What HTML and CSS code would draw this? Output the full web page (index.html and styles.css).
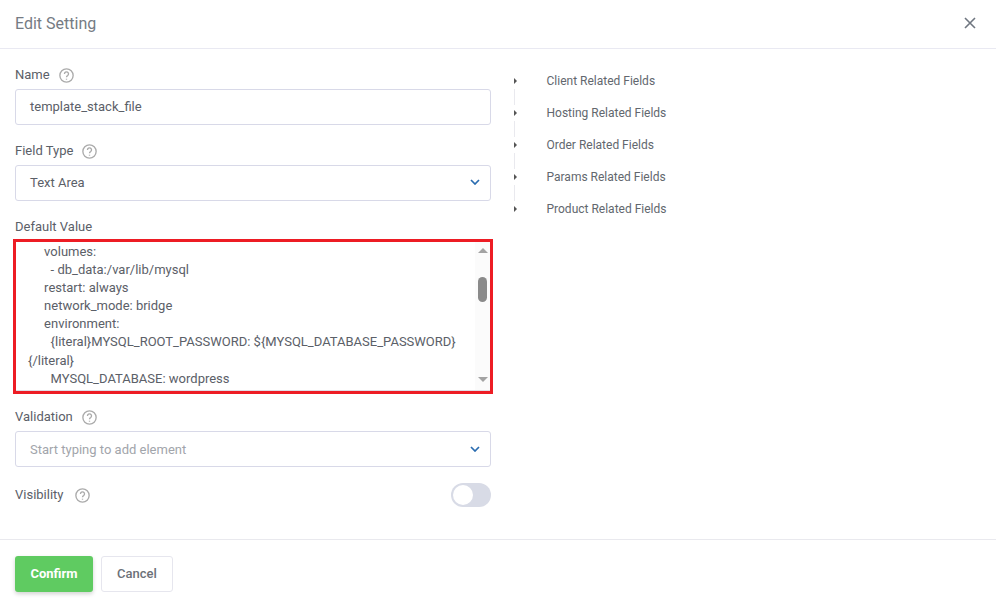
FILE: index.html
```html
<!DOCTYPE html>
<html lang="en">
<head>
<meta charset="utf-8">
<title>Edit Setting</title>
<link rel="stylesheet" href="styles.css">
</head>
<body>
<div class="modal">
  <header class="modal-head">
    <h1 class="modal-title">Edit Setting</h1>
    <svg class="close-icon" viewBox="0 0 12 12" width="12" height="12"><path d="M1 1l10 10M11 1L1 11"/></svg>
  </header>
  <main class="modal-body">
    <form class="form-col">
      <div class="field">
        <div class="label"><span>Name</span><svg class="help" viewBox="0 0 14 14"><circle cx="7" cy="7" r="6.2"/><path d="M5.1 5.5a1.9 1.9 0 1 1 2.9 1.6c-.7.4-1 .8-1 1.5"/><path class="dot" d="M7 10v.9"/></svg></div>
        <div class="control value">template_stack_file</div>
      </div>
      <div class="field">
        <div class="label"><span>Field Type</span><svg class="help" viewBox="0 0 14 14"><circle cx="7" cy="7" r="6.2"/><path d="M5.1 5.5a1.9 1.9 0 1 1 2.9 1.6c-.7.4-1 .8-1 1.5"/><path class="dot" d="M7 10v.9"/></svg></div>
        <div class="control select value"><span>Text Area</span><svg class="chev" viewBox="0 0 10 6" width="10" height="6"><path d="M1 1l4 4 4-4"/></svg></div>
      </div>
      <div class="field field-tight">
        <div class="label label-tight"><span>Default Value</span></div>
        <div class="highlight">
          <pre class="code">     volumes:
       - db_data:/var/lib/mysql
     restart: always
     network_mode: bridge
     environment:
       {literal}MYSQL_ROOT_PASSWORD: ${MYSQL_DATABASE_PASSWORD}
{/literal}
       MYSQL_DATABASE: wordpress</pre>
          <div class="scrollbar">
            <span class="arrow-up"></span>
            <span class="thumb"></span>
            <span class="arrow-down"></span>
          </div>
        </div>
      </div>
      <div class="field">
        <div class="label"><span>Validation</span><svg class="help" viewBox="0 0 14 14"><circle cx="7" cy="7" r="6.2"/><path d="M5.1 5.5a1.9 1.9 0 1 1 2.9 1.6c-.7.4-1 .8-1 1.5"/><path class="dot" d="M7 10v.9"/></svg></div>
        <div class="control select placeholder"><span>Start typing to add element</span><svg class="chev" viewBox="0 0 10 6" width="10" height="6"><path d="M1 1l4 4 4-4"/></svg></div>
      </div>
      <div class="toggle-row">
        <div class="label label-flat"><span>Visibility</span><svg class="help" viewBox="0 0 14 14"><circle cx="7" cy="7" r="6.2"/><path d="M5.1 5.5a1.9 1.9 0 1 1 2.9 1.6c-.7.4-1 .8-1 1.5"/><path class="dot" d="M7 10v.9"/></svg></div>
        <div class="switch"><span class="knob"></span></div>
      </div>
    </form>
    <ul class="tree">
      <li class="tree-row"><span class="caret"></span>Client Related Fields</li>
      <li class="tree-row"><span class="caret"></span>Hosting Related Fields</li>
      <li class="tree-row"><span class="caret"></span>Order Related Fields</li>
      <li class="tree-row"><span class="caret"></span>Params Related Fields</li>
      <li class="tree-row"><span class="caret"></span>Product Related Fields</li>
    </ul>
  </main>
  <footer class="modal-foot">
    <button class="btn btn-confirm" type="button">Confirm</button>
    <button class="btn btn-cancel" type="button">Cancel</button>
  </footer>
</div>
</body>
</html>
```
FILE: styles.css
```css
* { box-sizing: border-box; }
html, body { margin: 0; padding: 0; background: #fff; }
body { font-family: Roboto, "Liberation Sans", sans-serif; font-size: 13px; color: #5b6068; }

.modal { display: flex; flex-direction: column; height: 100vh; }

.modal-head {
  flex: none; height: 49px; display: flex; align-items: center; justify-content: space-between;
  padding: 0 20px 2px 15px; border-bottom: 1px solid #e9e9f2;
}
.modal-title { margin: 0; font-size: 16px; font-weight: 400; color: #757b83; }
.close-icon path { stroke: #6f7680; stroke-width: 1.6; fill: none; }

.modal-body { flex: 1; display: flex; gap: 24px; padding: 16px 15px 0; min-height: 0; }
.form-col { flex: none; width: 476px; }

.field { margin-bottom: 16px; }
.field-tight { margin-bottom: 13px; }

.label { display: flex; align-items: center; gap: 9px; height: 20px; margin-bottom: 4px; line-height: 20px; color: #5b6068; }
.label-tight { margin-bottom: 2px; }
.label-flat { margin-bottom: 0; gap: 11px; }

.help { flex: none; width: 15px; height: 15px; }
.help circle, .help path { fill: none; stroke: #ababab; stroke-width: 1.25; }

.control {
  height: 36px; display: flex; align-items: center; padding: 0 15px 0 14px;
  border: 1px solid #d8d9e8; border-radius: 3px; background: #fff; color: #5b6068;
}
.value { padding-bottom: 2px; }
.select { justify-content: space-between; }
.placeholder { color: #a2a5ab; }
.chev { margin-right: -5px; }
.chev path { fill: none; stroke: #2a6cb0; stroke-width: 1.7; }

.highlight {
  position: relative; height: 155px; margin: 0 -2px; border: 3px solid #ed1c24; overflow: hidden;
  background: #fff;
}
.code {
  margin: 0; padding: 1px 0 0 12px; font-family: inherit; font-size: 13px; line-height: 18.1px;
  color: #5b6068; white-space: pre; height: 100%; overflow: hidden; border-bottom: 1px solid #dedee6;
}
.scrollbar {
  position: absolute; top: 0; right: 0; bottom: 1px; width: 15px; background: #fbfbfb;
}
.arrow-up, .arrow-down, .thumb { position: absolute; display: block; }
.arrow-up {
  top: 6px; left: 3px; width: 0; height: 0;
  border-left: 5px solid transparent; border-right: 5px solid transparent; border-bottom: 5px solid #a3a3a3;
}
.arrow-down {
  bottom: 8px; left: 3px; width: 0; height: 0;
  border-left: 5px solid transparent; border-right: 5px solid transparent; border-top: 5px solid #a3a3a3;
}
.thumb { top: 35px; left: 3px; width: 9px; height: 25px; border-radius: 5px; background: #8a8a8a; }

.toggle-row { display: flex; align-items: center; justify-content: space-between; height: 24px; }
.switch { position: relative; width: 40px; height: 24px; border-radius: 12px; background: #d8dbe6; }
.knob {
  position: absolute; top: 2px; left: 2px; width: 20px; height: 20px; border-radius: 50%; background: #fff;
}

.tree { flex: 1; list-style: none; margin: 0; padding: 0; }
.tree-row {
  position: relative; display: flex; align-items: center; height: 32px; padding-left: 31.5px;
  font-size: 12px; color: #62676e;
}
.caret {
  position: absolute; left: -1px; top: 13px; width: 0; height: 0;
  border-top: 3px solid transparent; border-bottom: 3px solid transparent; border-left: 3px solid #555;
}
.tree-row:not(:last-child)::after {
  content: ""; position: absolute; left: -1px; top: 24px; width: 1px; height: 16px; background: #e9e9ee;
}

.modal-foot { flex: none; height: 65px; display: flex; gap: 8px; padding: 16px 15px 0; border-top: 1px solid #e9e9ee; }
.btn { height: 36px; padding: 0 0 2px; border-radius: 3px; font-family: inherit; font-size: 13px; cursor: pointer; }
.btn-confirm {
  width: 78px; border: none; background: #5fcb61; color: #fff; font-weight: 700;
  box-shadow: 0 2px 4px rgba(0,0,0,.18);
}
.btn-cancel { width: 72px; border: 1px solid #e6e6ee; background: #fff; color: #6c7178; font-weight: 500; }
```
